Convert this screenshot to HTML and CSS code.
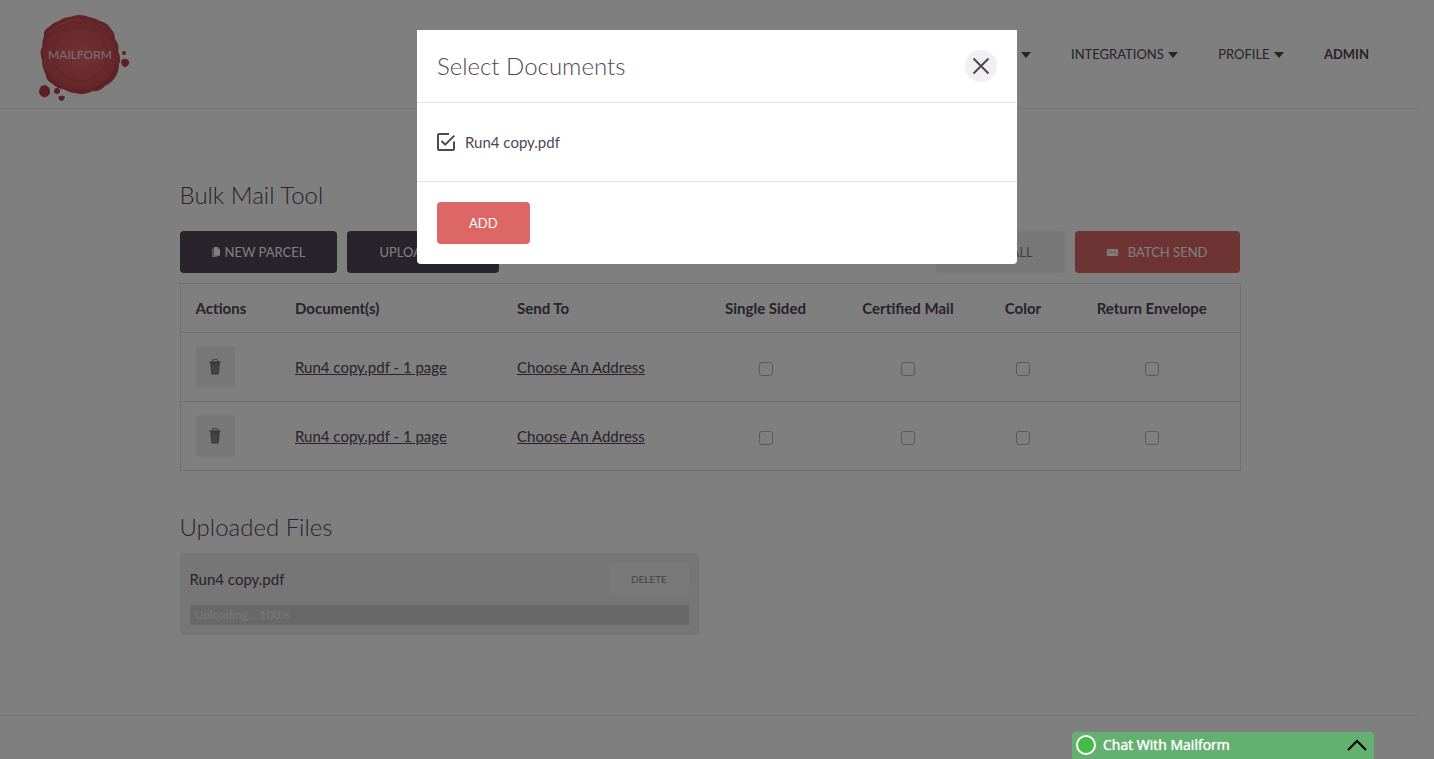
FILE: index.html
```html
<!DOCTYPE html>
<html lang="en">
<head>
<meta charset="utf-8">
<title>Mailform - Bulk Mail Tool</title>
<link rel="stylesheet" href="styles.css">
</head>
<body>
<svg class="sprite" width="0" height="0" aria-hidden="true">
  <symbol id="trash" viewBox="0 0 12 16">
    <path d="M3.500 2.500V1.200Q3.500.6 4.100.6H7.900Q8.500.6 8.500 1.200V2.500" fill="none" stroke="currentColor" stroke-width="1"/>
    <path d="M.5 2.300H11.500V4H.5Z" fill="currentColor"/>
    <path d="M1.200 4H10.800L9.800 14.600Q9.700 15.500 8.800 15.500H3.200Q2.300 15.500 2.200 14.600Z" fill="currentColor"/>
    <path d="M3.800 5.500L4.300 14M6 5.500V14M8.200 5.500L7.700 14" stroke="#b4b4b4" stroke-width=".6"/>
  </symbol>
</svg>

<div class="page">
  <header class="header">
    <a class="logo" href="#" aria-label="Mailform">
      <svg viewBox="0 0 92 88" width="92" height="88">
        <defs>
          <radialGradient id="wax" cx=".5" cy=".5" r=".55">
            <stop offset="0" stop-color="#e0666c"/><stop offset=".7" stop-color="#d0525a"/><stop offset="1" stop-color="#bd4048"/>
          </radialGradient>
        </defs>
        <path fill="url(#wax)" d="M31 3Q41-1 50 3Q56 4 61 7Q69 9 72 15Q76 19 76 25Q81 32 79 37Q83 45 80 50Q80 57 77 62Q73 69 66 72Q61 78 54 77Q45 82 36 79Q30 79 25 75Q18 75 14 70Q7 67 7 61Q3 54 3 46Q0 38 3 33Q3 27 5 22Q4 16 10 13Q15 8 20 7Q25 3 31 3Z"/>
        <circle cx="41" cy="40" r="27" fill="none" stroke="#b03c45" stroke-width="1" opacity=".6"/>
        <path fill="none" stroke="#b03840" stroke-width="2" opacity=".5" d="M7 61Q11 68 18 71Q26 77 36 76Q46 79 54 74Q63 73 70 65Q77 60 77 50"/>
        <path fill="none" stroke="#e8838a" stroke-width="1" opacity=".5" d="M10 19Q15 12 23 10Q31 5 41 5M60 10Q69 13 72 22M7 43Q5 52 10 57"/>
        <g fill="#b8404a"><path d="M0 77Q1 71 6 71Q12 73 11 79Q9 84 4 83Q0 81 0 77Z"/><circle cx="18" cy="77" r="3"/><path d="M19 83Q23 80 26 83Q25 87 22 87Q20 86 19 83Z"/><circle cx="85" cy="39" r="2"/><path d="M82 48Q83 44 87 45Q91 46 90 50Q88 54 85 53Q82 51 82 48Z"/></g>
        <text class="logo-text" x="41" y="45" text-anchor="middle">MAILFORM</text>
      </svg>
    </a>
    <nav class="nav">
      <a href="#">TOOLS <span class="caret"></span></a>
      <a href="#">INTEGRATIONS <span class="caret"></span></a>
      <a href="#">PROFILE <span class="caret"></span></a>
      <a class="strong" href="#">ADMIN</a>
    </nav>
  </header>

  <main class="main">
    <h1 class="title">Bulk Mail Tool</h1>
    <div class="toolbar">
      <button class="btn btn-dark" type="button">
        <svg class="icon-copy" viewBox="0 0 8 10" width="8" height="10" aria-hidden="true"><path fill="currentColor" d="M0 1.500H1.500V8.500H5.500V10H0Z" opacity=".7"/><path fill="currentColor" d="M2 0H6L8 2V8.800H2Z"/><path d="M6 0V2H8" fill="none" stroke="#524656" stroke-width=".5"/></svg>
        NEW PARCEL
      </button>
      <button class="btn btn-dark" type="button">UPLOAD FILES</button>
      <button class="btn btn-light push" type="button">CLEAR ALL</button>
      <button class="btn btn-red" type="button">
        <svg class="icon-mail" viewBox="0 0 11 8" width="11" height="8" aria-hidden="true"><rect y="1" width="11" height="7" rx="1" fill="currentColor"/><path d="M1.500 2L5.500 5L9.500 2M1.500 6.500L4 4M9.500 6.500L7 4" fill="none" stroke="#dd6666" stroke-width=".6"/></svg>
        BATCH SEND
      </button>
    </div>

    <table class="parcels">
      <colgroup><col class="c-actions"><col class="c-docs"><col class="c-send"><col class="c-single"><col class="c-cert"><col class="c-color"><col class="c-return"></colgroup>
      <thead>
        <tr><th>Actions</th><th>Document(s)</th><th>Send To</th><th class="mid">Single Sided</th><th class="mid">Certified Mail</th><th class="mid">Color</th><th class="mid">Return Envelope</th></tr>
      </thead>
      <tbody>
        <tr>
          <td><button class="btn-trash" type="button" aria-label="Delete parcel"><svg width="12" height="16"><use href="#trash"/></svg></button></td>
          <td><a href="#">Run4 copy.pdf - 1 page</a></td>
          <td><a href="#">Choose An Address</a></td>
          <td class="mid"><input class="check" type="checkbox" aria-label="Single Sided"></td>
          <td class="mid"><input class="check" type="checkbox" aria-label="Certified Mail"></td>
          <td class="mid"><input class="check" type="checkbox" aria-label="Color"></td>
          <td class="mid"><input class="check" type="checkbox" aria-label="Return Envelope"></td>
        </tr>
        <tr>
          <td><button class="btn-trash" type="button" aria-label="Delete parcel"><svg width="12" height="16"><use href="#trash"/></svg></button></td>
          <td><a href="#">Run4 copy.pdf - 1 page</a></td>
          <td><a href="#">Choose An Address</a></td>
          <td class="mid"><input class="check" type="checkbox" aria-label="Single Sided"></td>
          <td class="mid"><input class="check" type="checkbox" aria-label="Certified Mail"></td>
          <td class="mid"><input class="check" type="checkbox" aria-label="Color"></td>
          <td class="mid"><input class="check" type="checkbox" aria-label="Return Envelope"></td>
        </tr>
      </tbody>
    </table>

    <h2 class="title">Uploaded Files</h2>
    <section class="file">
      <div class="file-row">
        <span>Run4 copy.pdf</span>
        <button class="btn-delete" type="button">DELETE</button>
      </div>
      <div class="progress">Uploading... 100%</div>
    </section>
  </main>
  <footer class="footer"></footer>
</div>

<div class="overlay">
  <div class="modal" role="dialog" aria-labelledby="modal-title">
    <div class="modal-head">
      <h2 class="title" id="modal-title">Select Documents</h2>
      <button class="close" type="button" aria-label="Close"><svg viewBox="0 0 18 18" width="18" height="18"><path d="M1.500 1.500L16.500 16.500M16.500 1.500L1.500 16.500" stroke="currentColor" stroke-width="2"/></svg></button>
    </div>
    <div class="modal-body">
      <label class="option">
        <input class="option-input" type="checkbox" checked>
        <svg viewBox="0 0 18 18" width="18" height="18" aria-hidden="true"><path d="M12 1H2Q1 1 1 2V16Q1 17 2 17H16Q17 17 17 16V8.500" fill="none" stroke="currentColor" stroke-width="2"/><path d="M4.500 8L8.200 11.700L17.300 2.600" fill="none" stroke="currentColor" stroke-width="2"/></svg>
        <span>Run4 copy.pdf</span>
      </label>
    </div>
    <div class="modal-foot"><button class="btn btn-red" type="button">ADD</button></div>
  </div>
</div>

<button class="chat" type="button">
  <span class="chat-dot"></span>
  <span class="chat-label">Chat With Mailform</span>
  <svg viewBox="0 0 20 12" width="20" height="12" aria-hidden="true"><path d="M1 11L10 2L19 11" fill="none" stroke="#000" stroke-width="2"/></svg>
</button>
</body>
</html>
```
FILE: styles.css
```css
* { box-sizing: border-box; }
html, body { height: 100%; }
body {
  margin: 0;
  background: #fff;
  color: #524656;
  font-family: Lato, sans-serif;
  font-size: 15px;
  line-height: 20px;
  overflow: hidden;
}
a { color: inherit; }
button { font-family: inherit; border: 0; cursor: pointer; }
.sprite { position: absolute; }

.page { margin-right: 15px; }

.header {
  display: flex;
  justify-content: space-between;
  height: 109px;
  padding: 14px 50px 0 39px;
  border-bottom: 1px solid #eee;
}
.logo-text { font-family: Lato, sans-serif; font-size: 12px; fill: #f0e4e4; }
.nav { display: flex; gap: 40px; padding-top: 30px; font-size: 13px; }
.nav a { text-decoration: none; }
.nav .strong { font-weight: 700; }
.caret {
  display: inline-block;
  margin-left: 1px;
  border: 5px solid transparent;
  border-top: 6px solid currentColor;
  border-bottom: 0;
  vertical-align: 1px;
}

.main { max-width: 1060px; margin: 0 auto; padding: 70px 0 80px; }
.title { margin: 0; font-size: 24px; line-height: 32px; font-weight: 300; }

.toolbar { display: flex; gap: 10px; margin: 20px 0 10px; }
.btn {
  display: flex;
  align-items: center;
  height: 42px;
  padding: 0 32px;
  border-radius: 4px;
  font-size: 13px;
  color: #fff;
}
.btn-dark { background: #524656; }
.btn-light { background: #f0f0f0; color: #7e7e7e; }
.btn-red { background: #dd6666; }
.push { margin-left: auto; }
.icon-copy { margin-right: 5px; }
.icon-mail { margin-right: 10px; }

.parcels { width: 100%; table-layout: fixed; border-collapse: collapse; border: 1px solid #e0e0e0; }
.parcels th, .parcels td { padding: 0 15px; text-align: left; }
.parcels th { height: 49px; font-weight: 700; }
.parcels td { height: 69px; }
.parcels tr { border-bottom: 1px solid #e0e0e0; }
.parcels .mid { text-align: center; }
.c-actions { width: 100px; }
.c-docs { width: 222px; }
.c-send { width: 195px; }
.c-single { width: 137px; }
.c-cert { width: 148px; }
.c-color { width: 82px; }
.c-return { width: 176px; }
.btn-trash {
  display: flex;
  align-items: center;
  justify-content: center;
  width: 39px;
  height: 42px;
  padding: 0;
  border-radius: 4px;
  background: #f0f0f0;
  color: #777;
}
.check {
  appearance: none;
  width: 14px;
  height: 14px;
  margin: 0;
  border: 1px solid #b4b4b4;
  border-radius: 3px;
  background: #fff;
  vertical-align: middle;
}

.parcels + .title { margin-top: 40px; }
.file { width: 49%; margin-top: 10px; padding: 10px; border-radius: 4px; background: #ececec; }
.file-row { display: flex; justify-content: space-between; align-items: center; margin-bottom: 10px; }
.btn-delete { width: 80px; height: 32px; padding: 0; border-radius: 4px; background: #f2f2f2; color: #8c8c8c; font-size: 10px; }
.progress { height: 20px; padding: 0 5px; background: #d0d0d0; color: #f2f2f2; font-size: 12px; }
.footer { height: 60px; border-top: 1px solid #eee; }

.overlay { position: fixed; inset: 0; padding: 30px 20px; background: rgba(0, 0, 0, .5); }
.modal { max-width: 600px; margin: 0 auto; border-radius: 0 0 4px 4px; background: #fff; }
.modal-head {
  display: flex;
  align-items: center;
  justify-content: space-between;
  padding: 20px;
  border-bottom: 1px solid #e4e4e4;
}
.close {
  display: flex;
  align-items: center;
  justify-content: center;
  width: 32px;
  height: 32px;
  padding: 0;
  border-radius: 50%;
  background: #f0f0f0;
  color: #524656;
}
.modal-body { padding: 29px 20px; border-bottom: 1px solid #e4e4e4; }
.option { display: flex; align-items: center; gap: 10px; height: 20px; }
.option-input { position: absolute; opacity: 0; margin: 0; width: 18px; height: 18px; }
.modal-foot { padding: 20px; }

.chat {
  position: fixed;
  right: 60px;
  bottom: 0;
  display: flex;
  align-items: center;
  width: 302px;
  height: 27px;
  padding: 0 7px 2px 4px;
  border-radius: 4px 4px 0 0;
  background: #64b070;
  color: #fff;
  font-family: "Open Sans", sans-serif;
  font-size: 14px;
}
.chat-dot { width: 20px; height: 20px; border: 2px solid #fff; border-radius: 50%; background: #47bb47; }
.chat-label { flex: 1; padding-left: 7px; text-align: left; text-shadow: 0 0 1px #fff; }
```
